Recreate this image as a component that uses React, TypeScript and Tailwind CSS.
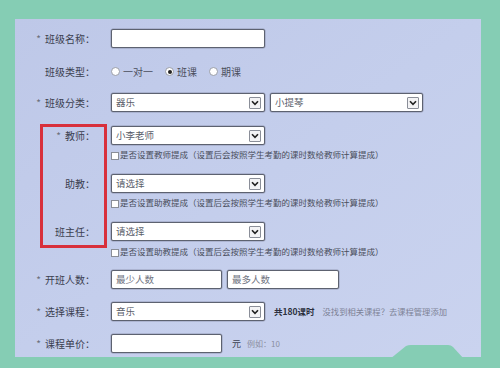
import React from "react";

const font = { fontFamily: '"Noto Sans CJK SC", "Noto Sans", sans-serif' };

function Label({ text, req }: { text: string; req?: boolean }) {
  return (
    <div className="w-[81px] shrink-0 text-right text-[10px] leading-none text-[#3b4050] pr-[1px]">
      {req && <span className="text-[#6b6f7c] mr-[4px]">*</span>}
      {text}
    </div>
  );
}

function Input({ w, ph }: { w: string; ph?: string }) {
  return (
    <div
      className={`${w} h-[19px] bg-white border border-[#5d6270] rounded-[2px] shadow-[0_0_0_0.5px_rgba(60,60,80,0.35)] flex items-center pl-[4px] text-[9.5px] text-[#6f7380]`}
    >
      {ph}
    </div>
  );
}

function Select({ w, value }: { w: string; value: string }) {
  return (
    <div
      className={`${w} h-[19px] bg-white border border-[#5d6270] rounded-[2px] shadow-[0_0_0_0.5px_rgba(60,60,80,0.35)] flex items-center justify-between pl-[4px] pr-[3px] text-[9.5px] text-[#5a5e6a]`}
    >
      <span>{value}</span>
      <span className="w-[12px] h-[12px] border border-[#8a8e98] bg-[#f3f3f5] rounded-[1px] flex items-center justify-center">
        <svg width="8" height="6" viewBox="0 0 8 6">
          <path d="M1 1.2 L4 4.4 L7 1.2" fill="none" stroke="#222" strokeWidth="1.6" />
        </svg>
      </span>
    </div>
  );
}

function Check({ text }: { text: string }) {
  return (
    <div className="flex items-center h-[9px] ml-[96px]">
      <span className="w-[8px] h-[8px] bg-white border border-[#8a8e98] shrink-0 mt-[3px]" />
      <span className="ml-[1px] text-[8.5px] leading-none text-[#4a4e5c] whitespace-nowrap">{text}</span>
    </div>
  );
}

function Radio({ on, text }: { on?: boolean; text: string }) {
  return (
    <div className="flex items-center">
      <span className="w-[9px] h-[9px] rounded-full bg-white border border-[#9a9ea8] flex items-center justify-center">
        {on && <span className="w-[4px] h-[4px] rounded-full bg-[#222]" />}
      </span>
      <span className="ml-[3px] text-[10px] leading-none text-[#4a4e5c]">{text}</span>
    </div>
  );
}

export default function App() {
  const tip = "是否设置教师提成（设置后会按照学生考勤的课时数给教师计算提成）";
  const tip2 = "是否设置助教提成（设置后会按照学生考勤的课时数给教师计算提成）";
  return (
    <div className="relative w-[500px] h-[368px] overflow-hidden bg-[#85cdb4] pt-[19px] pl-[15px]" style={font}>
      <div className="w-[466px] h-[338px] bg-gradient-to-br from-[#bec8e8] via-[#c4ceec] to-[#cad3ef] pt-[10px]">
        <div className="flex items-center h-[19px]">
          <Label text="班级名称：" req />
          <div className="ml-[15px]"><Input w="w-[154px]" /></div>
        </div>
        <div className="flex items-center h-[19px] mt-[14px]">
          <Label text="班级类型：" />
          <div className="ml-[15px] flex items-center gap-[12px] pl-[0px]">
            <Radio text="一对一" />
            <Radio on text="班课" />
            <Radio text="期课" />
          </div>
        </div>
        <div className="flex items-center h-[19px] mt-[12px]">
          <Label text="班级分类：" req />
          <div className="ml-[15px] flex gap-[5px]">
            <Select w="w-[154px]" value="器乐" />
            <Select w="w-[153px]" value="小提琴" />
          </div>
        </div>
        <div className="flex items-center h-[19px] mt-[14px]">
          <Label text="教师：" req />
          <div className="ml-[15px]"><Select w="w-[154px]" value="小李老师" /></div>
        </div>
        <div className="mt-[5px]"><Check text={tip} /></div>
        <div className="flex items-center h-[19px] mt-[15px]">
          <Label text="助教：" />
          <div className="ml-[15px]"><Select w="w-[154px]" value="请选择" /></div>
        </div>
        <div className="mt-[5px]"><Check text={tip2} /></div>
        <div className="flex items-center h-[19px] mt-[15px]">
          <Label text="班主任：" />
          <div className="ml-[15px]"><Select w="w-[154px]" value="请选择" /></div>
        </div>
        <div className="mt-[6px]"><Check text={tip2} /></div>
        <div className="flex items-center h-[19px] mt-[14px]">
          <Label text="开班人数：" req />
          <div className="ml-[15px] flex gap-[5px]">
            <Input w="w-[111px]" ph="最少人数" />
            <Input w="w-[112px]" ph="最多人数" />
          </div>
        </div>
        <div className="flex items-center h-[19px] mt-[13px]">
          <Label text="选择课程：" req />
          <div className="ml-[15px] flex items-center">
            <Select w="w-[154px]" value="音乐" />
            <span className="ml-[9px] text-[8.5px] text-[#2c3040] font-bold">共180课时</span>
            <span className="ml-[8px] text-[8.3px] text-[#7d8296]">没找到相关课程？去课程管理添加</span>
          </div>
        </div>
        <div className="flex items-center h-[19px] mt-[13px]">
          <Label text="课程单价：" req />
          <div className="ml-[15px] flex items-center">
            <Input w="w-[111px]" />
            <span className="ml-[10px] text-[9px] text-[#3b4050]">元</span>
            <span className="ml-[6px] text-[8px] text-[#8a8ea0]">例如：10</span>
          </div>
        </div>
      </div>
      <div className="absolute left-[40px] top-[124px] w-[67px] h-[124px] border-[3px] border-[#d8303c]" />
      <svg className="absolute left-[388px] top-[343px]" width="80" height="16" viewBox="0 0 80 16">
        <path d="M2 16 L18 3 Q20 2 23 2 L60 2 Q63 2 65 4 L76 16 Z" fill="#85cdb4" />
      </svg>
    </div>
  );
}
